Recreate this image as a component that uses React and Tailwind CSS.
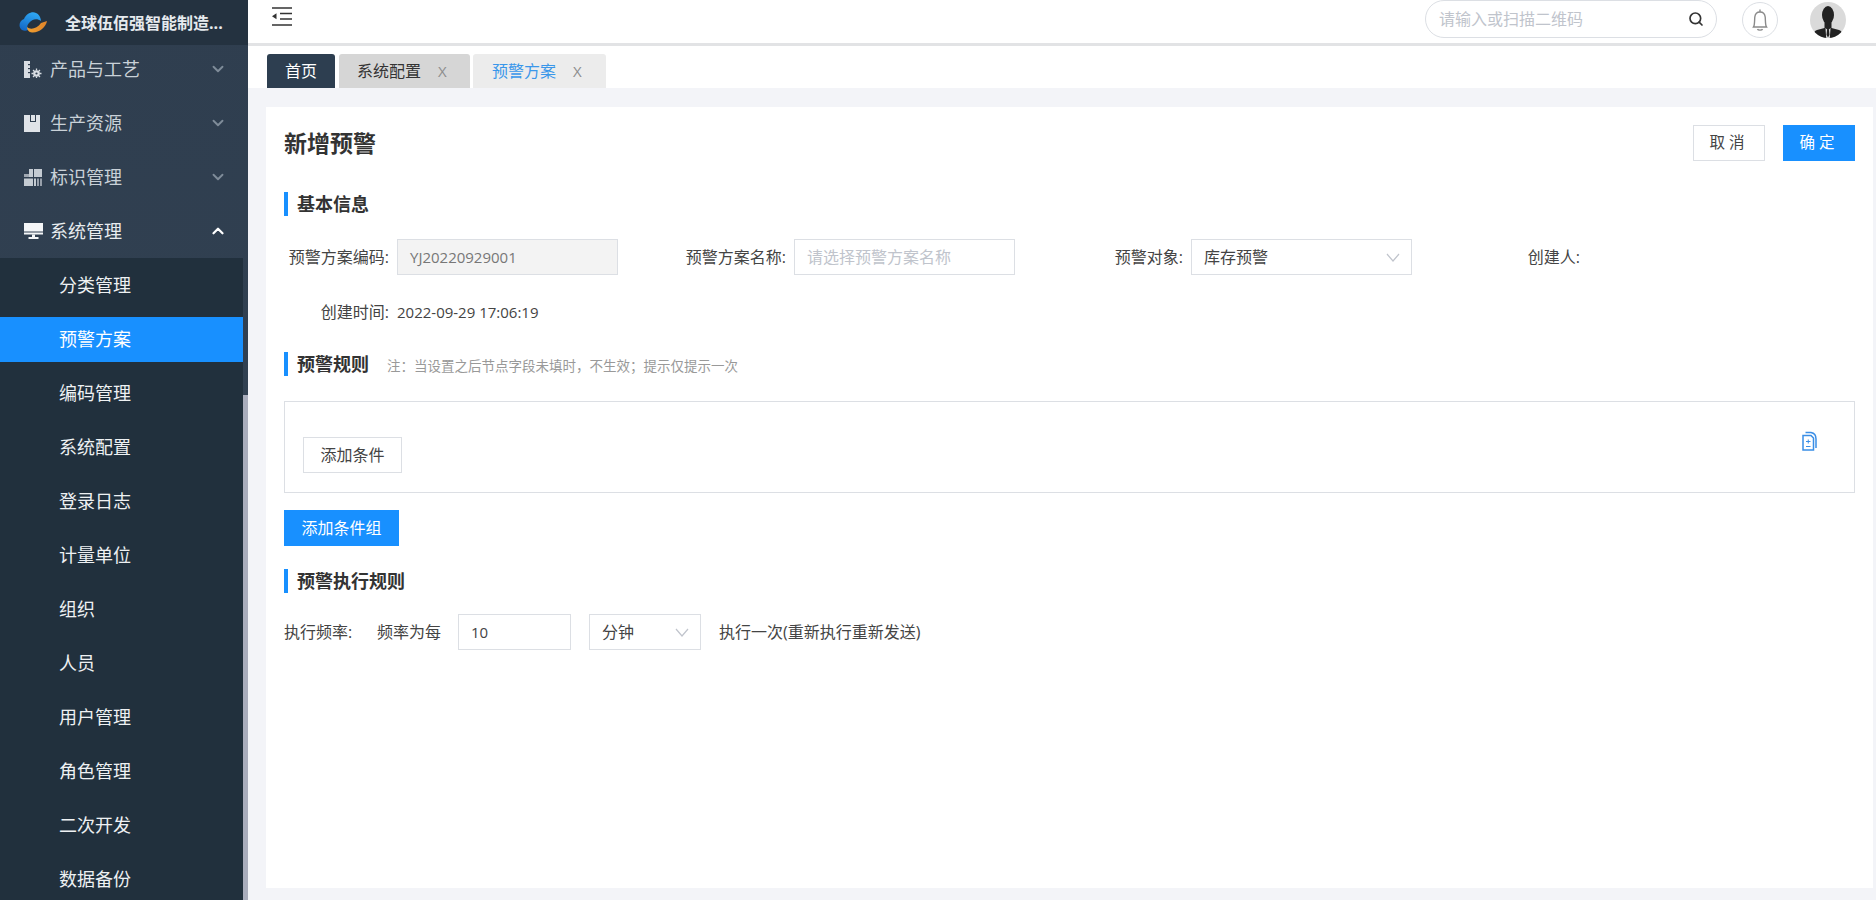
import React from "react";
import { ChevronDown, ChevronUp, Search } from "lucide-react";

const FONT = "font-['Open_Sans','Noto_Sans_CJK_SC',sans-serif]";

function Logo() {
  return (
    <svg width="28" height="21" viewBox="0 0 28 21">
      <defs>
        <linearGradient id="lb" x1="0.6" y1="0" x2="0.2" y2="1">
          <stop offset="0" stopColor="#2ea6f2" />
          <stop offset="1" stopColor="#1266c4" />
        </linearGradient>
        <linearGradient id="lo" x1="0" y1="0" x2="1" y2="0">
          <stop offset="0" stopColor="#f0a030" />
          <stop offset="1" stopColor="#e0842a" />
        </linearGradient>
      </defs>
      <path d="M3 18C-1 15 0 9 5 7C7 2 13 -1 17 1C20 2 22 6 22 9C18 6 13 7 10 11C8 13 8 15 9 18C7 19 5 19 3 18Z" fill="url(#lb)" />
      <path d="M8 15C11 18 18 17 22 11L28 9C27 15 20 21 13 20.500C10 20.300 8 18 8 15Z" fill="url(#lo)" />
    </svg>
  );
}

function MenuIcon({ kind }) {
  if (kind === "product")
    return (
      <svg width="18" height="17" viewBox="0 0 18 17" fill="#d8dde3">
        <rect x="0" y="0" width="6" height="17" />
        <rect x="4" y="3" width="2" height="1.200" fill="#2f3e4f" />
        <rect x="4" y="7" width="2" height="1.200" fill="#2f3e4f" />
        <rect x="4" y="11" width="2" height="1.200" fill="#2f3e4f" />
        <circle cx="12.500" cy="12.500" r="3.300" />
        <circle cx="12.500" cy="12.500" r="1.100" fill="#2f3e4f" />
        <path d="M12.500 7.500V17.500M7.500 12.500H17.500M9 9L16 16M16 9L9 16" stroke="#d8dde3" strokeWidth="1.300" strokeDasharray="2 6" />
      </svg>
    );
  if (kind === "res")
    return (
      <svg width="16" height="17" viewBox="0 0 16 17">
        <rect width="16" height="17" fill="#dfe3e8" />
        <path d="M6 0V7H12V0H11V6H7V0Z" fill="#2f3e4f" />
      </svg>
    );
  if (kind === "id")
    return (
      <svg width="18" height="17" viewBox="0 0 18 17" fill="#c4cbd2">
        <rect x="5" y="0" width="4" height="8" />
        <rect x="10" y="0" width="8" height="8" />
        <rect x="0" y="5" width="9" height="3" opacity="0.75" />
        <rect x="0" y="9.500" width="9" height="7.500" />
        <rect x="10" y="9.500" width="2" height="7.500" />
        <rect x="13" y="9.500" width="2" height="7.500" opacity="0.7" />
        <rect x="16" y="9.500" width="2" height="7.500" opacity="0.7" />
      </svg>
    );
  return (
    <svg width="19" height="16" viewBox="0 0 19 16" fill="#f4f6f8">
      <rect x="0" y="0" width="19" height="8.500" />
      <rect x="0" y="9.500" width="19" height="2" />
      <path d="M8 11.500H11V14H14.500V16H4.500V14H8Z" />
    </svg>
  );
}

function TopItem({ label, icon, open }) {
  const Chevron = open ? ChevronUp : ChevronDown;
  return (
    <div className={`flex h-[54px] items-center pl-6 pr-[21px] ${open ? "text-[#e8ecef]" : "text-[#c9d1d8]"}`}>
      <span className="flex w-[26px] justify-start"><MenuIcon kind={icon} /></span>
      <span className="flex-1 text-[18px]">{label}</span>
      <Chevron size={18} strokeWidth={open ? 3 : 2.500} className={open ? "text-white" : "text-[#7f8c99]"} />
    </div>
  );
}

function SubItem({ label, active }) {
  return (
    <div className={`flex h-[54px] items-center pl-[59px] text-[18px] ${active ? "py-[4.5px]" : ""}`}>
      <span className={`flex h-full items-center ${active ? "-ml-[59px] w-[243px] bg-[#1890ff] pl-[59px] text-white" : "text-[#eef1f3]"}`}>{label}</span>
    </div>
  );
}

function Sidebar() {
  const subs = ["分类管理", "预警方案", "编码管理", "系统配置", "登录日志", "计量单位", "组织", "人员", "用户管理", "角色管理", "二次开发", "数据备份"];
  return (
    <aside className="relative h-[900px] w-[248px] shrink-0 overflow-hidden bg-gradient-to-b from-[#2f3e4f] to-[#334354]">
      <div className="relative z-10 flex h-[45px] items-center bg-[#243240] pl-[19px]">
        <Logo />
        <span className="ml-[18px] whitespace-nowrap text-[16px] font-bold text-[#e6eaee]">全球伍佰强智能制造...</span>
      </div>
      <div className="-mt-[3px]">
        <TopItem label="产品与工艺" icon="product" />
        <TopItem label="生产资源" icon="res" />
        <TopItem label="标识管理" icon="id" />
        <TopItem label="系统管理" icon="sys" open />
        <div className="w-[243px] bg-[#21303d]">
          {subs.map((s) => <SubItem key={s} label={s} active={s === "预警方案"} />)}
        </div>
      </div>
      <div className="absolute bottom-0 right-0 top-[395px] w-[5px] bg-[#a9adbc]" />
    </aside>
  );
}

function Header() {
  return (
    <header className="flex h-[46px] items-start justify-between border-b-[3px] border-[#e2e3e5] bg-white">
      <svg className="ml-[24px] mt-[7px]" width="20" height="19" viewBox="0 0 20 19" fill="none" stroke="#333" strokeWidth="1.600">
        <path d="M0 1H20M8 6.500H20M8 12H20M0 18H20" />
        <path d="M0 9.300L4.500 6.300V12.300Z" fill="#333" stroke="none" />
      </svg>
      <div className="flex items-start">
        <div className="flex h-[38px] w-[292px] items-center justify-between rounded-[19px] border border-[#dcdfe4] pl-[13px] pr-[12px]">
          <span className="text-[16px] text-[#c0c4cc]">请输入或扫描二维码</span>
          <Search size={16} strokeWidth={2.500} className="text-[#333]" />
        </div>
        <div className="ml-[25px] mt-[2px] flex h-[36px] w-[36px] items-center justify-center rounded-full border border-[#dcdfe4]">
          <svg width="18" height="24" viewBox="0 0 18 24" fill="none" stroke="#8a8a8a" strokeWidth="1.400">
            <path d="M2.500 19C3.800 17 3.500 12 3.800 9C4.200 5.500 6 4 9 4C12 4 13.800 5.500 14.200 9C14.500 12 14.200 17 15.500 19Z" />
            <path d="M9 1.500V4M6.500 21C7 22.500 11 22.500 11.500 21" />
          </svg>
        </div>
        <svg className="ml-[32px] mr-[30px] mt-[2px]" width="36" height="36" viewBox="0 0 36 36">
          <defs><clipPath id="av"><circle cx="18" cy="18" r="18" /></clipPath></defs>
          <g clipPath="url(#av)">
            <rect width="36" height="36" fill="#dadada" />
            <ellipse cx="18" cy="13" rx="6" ry="9" fill="#222" />
            <path d="M14.500 20H21.500V26L29 28C32 29 33 32 33 36H3C3 32 4 29 7 28L14.500 26Z" fill="#222" />
            <path d="M15.500 26L18 28.500L20.500 26L19.800 36H16.200Z" fill="#e8e8e8" />
            <path d="M17 27.500H19L19.500 33L18 35.500L16.500 33Z" fill="#222" />
          </g>
        </svg>
      </div>
    </header>
  );
}

function Tab({ children, cls, close, w }) {
  return (
    <div className={`flex h-[34px] items-center rounded-t-[3px] text-[16px] ${cls} ${w}`}>
      {children}
      {close && <span className="ml-[17px] text-[15px] text-[#8d8d8d]">X</span>}
    </div>
  );
}

function Tabs() {
  return (
    <div className="flex h-[42px] items-end bg-white pl-[19px]">
      <Tab cls="justify-center bg-[#2d3e50] text-white" w="w-[68px]">首页</Tab>
      <Tab cls="ml-[4px] bg-[#d6d6d6] pl-[18px] text-[#333]" w="w-[131px]" close>系统配置</Tab>
      <Tab cls="ml-[3px] bg-[#ececec] pl-[19px] text-[#3a97ea]" w="w-[133px]" close>预警方案</Tab>
    </div>
  );
}

function SectionTitle({ children, note }) {
  return (
    <div className="flex h-[24px] items-center border-l-4 border-[#1890ff] pl-[9px]">
      <span className="text-[18px] font-bold leading-[24px] text-[#333]">{children}</span>
      {note && <span className="ml-[18px] mt-[5px] text-[13.500px] text-[#999]">{note}</span>}
    </div>
  );
}

function Chevron() {
  return (
    <svg width="14" height="9" viewBox="0 0 14 9" fill="none" stroke="#c0c4cc" strokeWidth="1.200">
      <path d="M1 1L7 8L13 1" />
    </svg>
  );
}

function Field({ label, children }) {
  return (
    <div className="flex h-[36px] items-center">
      <span className="w-[113px] whitespace-nowrap pr-[8px] text-right text-[16px] text-[#444]">{label}</span>
      {children}
    </div>
  );
}

function Form() {
  return (
    <main className="mb-[12px] ml-[18px] mr-[3px] mt-[19px] h-[781px] bg-white pl-[18px] pr-[18px] pt-[18px]">
      <div className="flex items-start justify-between">
        <h1 className="mt-[3px] text-[23px] font-bold leading-[30px] text-[#333]">新增预警</h1>
        <div className="flex gap-[18px]">
          <button className="h-[36px] w-[72px] border border-[#dcdfe4] bg-white text-[15.500px] tracking-[4px] text-[#444]">取消</button>
          <button className="h-[36px] w-[72px] bg-[#1890ff] text-[15.500px] tracking-[4px] text-white">确定</button>
        </div>
      </div>

      <div className="mt-[31px]"><SectionTitle>基本信息</SectionTitle></div>

      <div className="mt-[23px] grid grid-cols-[397px_397px_397px_397px] gap-y-[19px]">
        <Field label="预警方案编码:">
          <div className="flex h-[36px] w-[221px] items-center border border-[#dcdfe4] bg-[#f3f3f3] pl-[12px] text-[15px] text-[#777]">YJ20220929001</div>
        </Field>
        <Field label="预警方案名称:">
          <div className="flex h-[36px] w-[221px] items-center border border-[#dcdfe4] pl-[12px] text-[16px] text-[#c0c4cc]">请选择预警方案名称</div>
        </Field>
        <Field label="预警对象:">
          <div className="flex h-[36px] w-[221px] items-center justify-between border border-[#dcdfe4] pl-[12px] pr-[11px] text-[16px] text-[#444]">库存预警<Chevron /></div>
        </Field>
        <Field label="创建人:"><span /></Field>
        <Field label="创建时间:">
          <span className="text-[15px] text-[#444]">2022-09-29 17:06:19</span>
        </Field>
      </div>

      <div className="mt-[22px]"><SectionTitle note="注：当设置之后节点字段未填时，不生效；提示仅提示一次">预警规则</SectionTitle></div>

      <div className="relative mt-[25px] h-[92px] border border-[#dcdfe4] pl-[18px] pt-[35px]">
        <button className="h-[36px] w-[99px] border border-[#dcdfe4] text-[16px] text-[#444]">添加条件</button>
        <svg className="absolute right-[37px] top-[29px]" width="15" height="20" viewBox="0 0 15 20" fill="none" stroke="#3a8ee6" strokeWidth="1.500">
          <path d="M1 4.500H9L11.500 7V19H1Z" />
          <path d="M3.500 1.500H9C12 2 14 4.500 14 8V17" />
          <path d="M4 10.500H8.500M6.250 8.500V12.500M4 15.500H8.500" strokeWidth="1" />
        </svg>
      </div>

      <button className="mt-[17px] block h-[36px] w-[115px] bg-[#1890ff] text-[16px] text-white">添加条件组</button>

      <div className="mt-[23px]"><SectionTitle>预警执行规则</SectionTitle></div>

      <div className="mt-[21px] flex h-[36px] items-center text-[16px] text-[#444]">
        <span className="w-[93px]">执行频率:</span>
        <span className="w-[81px]">频率为每</span>
        <div className="flex h-[36px] w-[113px] items-center border border-[#dcdfe4] pl-[12px] text-[15px]">10</div>
        <div className="ml-[18px] flex h-[36px] w-[112px] items-center justify-between border border-[#dcdfe4] pl-[12px] pr-[11px]">分钟<Chevron /></div>
        <span className="ml-[18px]">执行一次(重新执行重新发送)</span>
      </div>
    </main>
  );
}

export default function App() {
  return (
    <div className={`flex h-[900px] w-[1876px] overflow-hidden bg-[#f3f4f8] ${FONT}`}>
      <Sidebar />
      <div className="flex min-w-0 flex-1 flex-col">
        <Header />
        <Tabs />
        <Form />
      </div>
    </div>
  );
}
